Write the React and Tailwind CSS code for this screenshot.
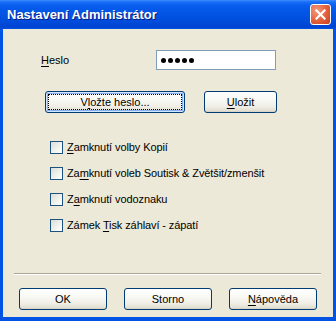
import React from "react";

const btn =
  "h-[22px] rounded-[3px] border border-[#003c74] bg-[linear-gradient(180deg,#ffffff_0%,#f8f8f4_40%,#efede4_75%,#e3e0d3_92%,#d6d0c5_100%)] text-[11px] text-black flex items-center justify-center leading-none";

function U({ children }) {
  return <span className="underline underline-offset-[2px] decoration-[1px]">{children}</span>;
}

function Check({ children }) {
  return (
    <div className="flex items-center h-[13px]">
      <div className="w-[13px] h-[13px] border border-[#1c5180] bg-[linear-gradient(135deg,#dcdcd7_0%,#f0f0ea_50%,#ffffff_100%)]" />
      <div className="ml-[4px] text-[11px] leading-none tracking-[-0.1px] text-black whitespace-nowrap">{children}</div>
    </div>
  );
}

export default function App() {
  return (
    <div
      className="w-[336px] h-[321px] flex flex-col bg-[#0053e3] overflow-hidden"
      style={{ fontFamily: '"Liberation Sans", Arial, sans-serif' }}
    >
      {/* Title bar */}
      <div className="h-[29px] shrink-0 flex items-center pl-[7px] pr-[5px] bg-[linear-gradient(180deg,#3d8fff_0px,#1a6ef7_2px,#0a5fee_5px,#0358e8_10px,#0254e3_50%,#004ad9_80%,#0043d0_92%,#0050e2_100%)]">
        <div className="flex-1 text-white font-bold text-[13px] leading-none [text-shadow:1px_1px_0_#0a1a80]">
          Nastavení Administrátor
        </div>
        <div className="w-[21px] h-[21px] rounded-[3px] border border-white bg-[radial-gradient(circle_at_30%_30%,#f29a7c_0%,#e3603b_55%,#c63d1c_100%)] flex items-center justify-center">
          <svg width="11" height="11" viewBox="0 0 11 11">
            <path d="M1.5 1.5 L9.5 9.5 M9.5 1.5 L1.5 9.5" stroke="white" strokeWidth="2.2" strokeLinecap="square" />
          </svg>
        </div>
      </div>

      {/* Body */}
      <div className="flex-1 px-[3px] pb-[4px] flex flex-col">
        <div className="flex-1 bg-[#ece9d8] flex flex-col">
          {/* Heslo row */}
          <div className="mt-[21px] flex items-center h-[20px] pl-[38px]">
            <div className="w-[115px] text-[11px] leading-none text-black">
              <U>H</U>eslo
            </div>
            <div className="w-[120px] h-[20px] border border-[#7f9db9] bg-white flex items-center pl-[4px] gap-[2px]">
              <span className="w-[5px] h-[5px] rounded-full bg-black" />
              <span className="w-[5px] h-[5px] rounded-full bg-black" />
              <span className="w-[5px] h-[5px] rounded-full bg-black" />
              <span className="w-[5px] h-[5px] rounded-full bg-black" />
              <span className="w-[5px] h-[5px] rounded-full bg-black" />
            </div>
          </div>

          {/* Buttons row */}
          <div className="mt-[21px] flex pl-[42px] gap-[19px]">
            <div
              className={`${btn} w-[140px] shadow-[inset_0_0_0_1px_#cee7ff,inset_0_0_0_2px_#8aaff0] outline outline-1 outline-dotted outline-black outline-offset-[-4px]`}
            >
              V<U>l</U>ožte heslo...
            </div>
            <div className={`${btn} w-[73px]`}>
              <U>U</U>ložit
            </div>
          </div>

          {/* Checkboxes */}
          <div className="mt-[28px] pl-[47px] flex flex-col gap-[13px]">
            <Check>
              <U>Z</U>amknutí volby Kopií
            </Check>
            <Check>
              Za<U>m</U>knutí voleb Soutisk &amp; Zvětšit/zmenšit
            </Check>
            <Check>
              Z<U>a</U>mknutí vodoznaku
            </Check>
            <Check>
              Zámek <U>T</U>isk záhlaví - zápatí
            </Check>
          </div>

          {/* Separator */}
          <div className="mt-[41px] ml-[11px] mr-[12px] border-t border-t-[#aca899] border-b border-b-white" />

          {/* Bottom buttons */}
          <div className="mt-[13px] pl-[16px] flex gap-[17px]">
            <div className={`${btn} w-[88px]`}>OK</div>
            <div className={`${btn} w-[88px]`}>Storno</div>
            <div className={`${btn} w-[88px]`}>
              <U>N</U>ápověda
            </div>
          </div>
        </div>
      </div>
    </div>
  );
}
